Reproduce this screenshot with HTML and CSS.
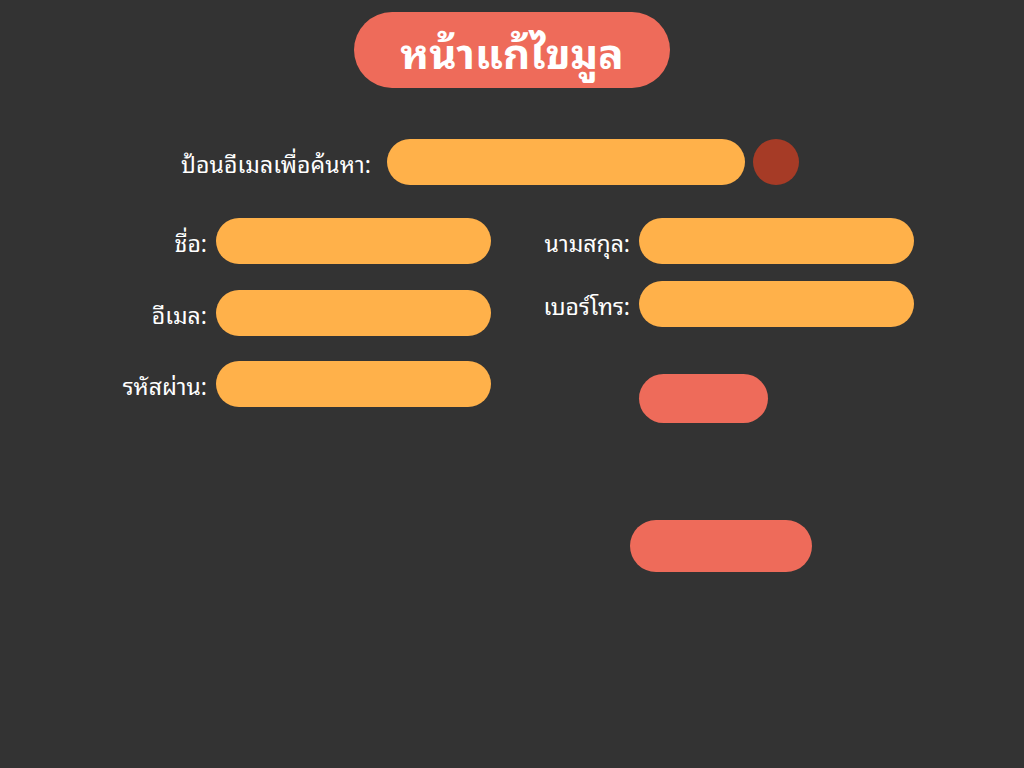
FILE: index.html
```html
<!DOCTYPE html>
<html lang="th">
<head>
<meta charset="utf-8">
<title>หน้าแก้ไขมูล</title>
<link rel="stylesheet" href="styles.css">
</head>
<body>
<div class="page">
  <header class="header">
    <h1 class="title">หน้าแก้ไขมูล</h1>
  </header>

  <div class="search-row">
    <label class="search-label">ป้อนอีเมลเพื่อค้นหา:</label>
    <div class="field search-field"></div>
    <div class="search-btn"></div>
  </div>

  <div class="form">
    <div class="col col-left">
      <div class="row row-left">
        <label class="label label-left">ชื่อ:</label>
        <div class="field"></div>
      </div>
      <div class="row row-left">
        <label class="label label-left">อีเมล:</label>
        <div class="field"></div>
      </div>
      <div class="row row-left row-tight">
        <label class="label label-left">รหัสผ่าน:</label>
        <div class="field"></div>
      </div>
    </div>
    <div class="col col-right">
      <div class="row row-right">
        <label class="label label-right">นามสกุล:</label>
        <div class="field"></div>
      </div>
      <div class="row row-right">
        <label class="label label-right">เบอร์โทร:</label>
        <div class="field"></div>
      </div>
      <div class="btn-wrap">
        <div class="btn-small"></div>
      </div>
    </div>
  </div>

  <div class="bottom">
    <div class="btn-large"></div>
  </div>
</div>
</body>
</html>
```
FILE: styles.css
```css
html, body {
  margin: 0;
  padding: 0;
  background: #333333;
  width: 1024px;
  height: 768px;
  overflow: hidden;
  font-family: "Noto Sans Thai Looped", "Noto Sans", sans-serif;
  color: #ffffff;
}

.page {
  padding-top: 12px;
}

.header {
  display: flex;
  justify-content: center;
}

.title {
  margin: 0;
  width: 316px;
  height: 76px;
  border-radius: 38px;
  background: #ee6b5a;
  color: #ffffff;
  font-size: 42px;
  font-weight: 700;
  display: flex;
  align-items: center;
  justify-content: center;
  line-height: 1;
}

.search-row {
  display: flex;
  align-items: center;
  margin-top: 51px;
}

.search-label {
  width: 371px;
  text-align: right;
  font-size: 23px;
  margin-right: 16px;
  letter-spacing: 0.1px;
}

.field {
  height: 46px;
  width: 275px;
  border-radius: 23px;
  background: #ffb14a;
}

.search-field {
  width: 358px;
}

.search-btn {
  width: 46px;
  height: 46px;
  border-radius: 50%;
  background: #a63b26;
  margin-left: 8px;
}

.form {
  display: flex;
  margin-top: 33px;
}

.col {
  display: flex;
  flex-direction: column;
}

.row {
  display: flex;
  align-items: center;
}

.label {
  text-align: right;
  font-size: 23px;
  margin-right: 9px;
}

.col-left {
  gap: 26px;
}

.row-tight {
  margin-top: -1px;
}

.label-left {
  width: 207px;
}

.col-right {
  margin-left: 20px;
  gap: 17px;
}

.label-right {
  width: 119px;
}

.btn-wrap {
  padding-left: 128px;
  padding-top: 30px;
}

.btn-small {
  width: 129px;
  height: 49px;
  border-radius: 25px;
  background: #ee6b5a;
}

.bottom {
  margin-top: 97px;
  padding-left: 630px;
}

.btn-large {
  width: 182px;
  height: 52px;
  border-radius: 26px;
  background: #ee6b5a;
}
```
